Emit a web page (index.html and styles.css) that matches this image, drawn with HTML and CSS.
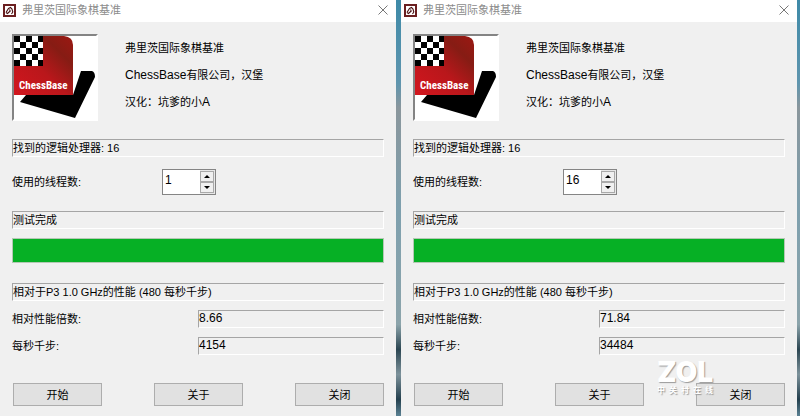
FILE: index.html
```html
<!DOCTYPE html>
<html lang="zh-CN">
<head>
    <meta charset="UTF-8">
    <meta name="viewport" content="width=device-width, initial-scale=1.0">
    <title>弗里茨国际象棋基准</title>
    <link rel="stylesheet" href="styles.css">
</head>
<body>
    <!-- Shared drawings -->
    <svg class="defs" width="0" height="0" aria-hidden="true">
        <defs>
            <linearGradient id="redFade" x1="0" y1="1" x2="1" y2="0">
                <stop offset="0" stop-color="#d3161e"/>
                <stop offset="0.45" stop-color="#b9171b"/>
                <stop offset="0.75" stop-color="#861c14"/>
                <stop offset="1" stop-color="#9c1812"/>
            </linearGradient>
            <pattern id="checks" width="12" height="12" patternUnits="userSpaceOnUse">
                <rect width="12" height="12" fill="#fff"/>
                <path d="M0 0h6v6h6v6H6V6H0z" fill="#000"/>
            </pattern>
            <symbol id="horse" viewBox="0 0 13 13">
                <rect x="1" y="1" width="11" height="11" fill="#fff" stroke="#6b1f20" stroke-width="2"/>
                <path d="M3 8.5 5.5 4.5 7.5 3.5 9 5l.8 3-1.3 2M6.5 5.5 7.2 7 4.5 9.5 3 8.5" fill="none" stroke="#4b1113" stroke-width="1.1"/>
            </symbol>
            <symbol id="logo" viewBox="0 0 82 83">
                <path d="M67 35h11q3 1 3 6L61 82 6 66l6-7h47z" fill="#000"/>
                <path d="M0 0h50q9 1 9 9v50H0z" fill="url(#redFade)"/>
                <rect width="29" height="30" fill="url(#checks)"/>
            </symbol>
        </defs>
    </svg>

    <main class="desktop">
        <section class="window">
            <header class="titlebar">
                <svg class="app-icon"><use href="#horse"/></svg>
                <h1>弗里茨国际象棋基准</h1>
                <button class="close" type="button" aria-label="关闭窗口">
                    <svg viewBox="0 0 10 10"><path d="M0.5 0.5 9.5 9.5M9.5 0.5 0.5 9.5"/></svg>
                </button>
            </header>
            <form class="content">
                <div class="about">
                    <div class="logo">
                        <svg viewBox="0 0 82 83"><use href="#logo"/><text x="5" y="53">ChessBase</text></svg>
                    </div>
                    <div class="about-text">
                        <p>弗里茨国际象棋基准</p>
                        <p><span class="latin">ChessBase</span>有限公司，汉堡</p>
                        <p>汉化：坑爹的小<span class="latin">A</span></p>
                    </div>
                </div>
                <div class="field">找到的逻辑处理器: 16</div>
                <div class="threads">
                    <label for="threads1">使用的线程数:</label>
                    <div class="spinner">
                        <input id="threads1" type="text" value="1">
                        <div class="arrows">
                            <button type="button" class="up" aria-label="增加"></button>
                            <button type="button" class="down" aria-label="减少"></button>
                        </div>
                    </div>
                </div>
                <div class="field">测试完成</div>
                <div class="progress" role="progressbar" aria-label="进度" aria-valuenow="100"></div>
                <div class="field">相对于P3 1.0 GHz的性能 (480 每秒千步)</div>
                <div class="result">
                    <label for="ratio1">相对性能倍数:</label>
                    <output class="field" id="ratio1">8.66</output>
                </div>
                <div class="result">
                    <label for="knps1">每秒千步:</label>
                    <output class="field" id="knps1">4154</output>
                </div>
                <div class="actions">
                    <button type="button">开始</button>
                    <button type="button">关于</button>
                    <button type="button">关闭</button>
                </div>
            </form>
        </section>

        <section class="window">
            <header class="titlebar">
                <svg class="app-icon"><use href="#horse"/></svg>
                <h1>弗里茨国际象棋基准</h1>
                <button class="close" type="button" aria-label="关闭窗口">
                    <svg viewBox="0 0 10 10"><path d="M0.5 0.5 9.5 9.5M9.5 0.5 0.5 9.5"/></svg>
                </button>
            </header>
            <form class="content">
                <div class="about">
                    <div class="logo">
                        <svg viewBox="0 0 82 83"><use href="#logo"/><text x="5" y="53">ChessBase</text></svg>
                    </div>
                    <div class="about-text">
                        <p>弗里茨国际象棋基准</p>
                        <p><span class="latin">ChessBase</span>有限公司，汉堡</p>
                        <p>汉化：坑爹的小<span class="latin">A</span></p>
                    </div>
                </div>
                <div class="field">找到的逻辑处理器: 16</div>
                <div class="threads">
                    <label for="threads2">使用的线程数:</label>
                    <div class="spinner">
                        <input id="threads2" type="text" value="16">
                        <div class="arrows">
                            <button type="button" class="up" aria-label="增加"></button>
                            <button type="button" class="down" aria-label="减少"></button>
                        </div>
                    </div>
                </div>
                <div class="field">测试完成</div>
                <div class="progress" role="progressbar" aria-label="进度" aria-valuenow="100"></div>
                <div class="field">相对于P3 1.0 GHz的性能 (480 每秒千步)</div>
                <div class="result">
                    <label for="ratio2">相对性能倍数:</label>
                    <output class="field" id="ratio2">71.84</output>
                </div>
                <div class="result">
                    <label for="knps2">每秒千步:</label>
                    <output class="field" id="knps2">34484</output>
                </div>
                <div class="actions">
                    <button type="button">开始</button>
                    <button type="button">关于</button>
                    <button type="button">关闭</button>
                </div>
            </form>
            <div class="watermark">
                <strong>ZOL</strong>
                <div class="watermark-sub">
                    <span>中</span><span>关</span><span>村</span><span>在</span><span>线</span>
                </div>
            </div>
        </section>
    </main>
</body>
</html>
```
FILE: styles.css
```css
* {
    box-sizing: border-box;
}
body {
    margin: 0;
    font-family: "Liberation Sans", "Noto Sans CJK SC", sans-serif;
    font-size: 11px;
    line-height: 16px;
    color: #000;
}
h1, p {
    margin: 0;
    font-size: 11px;
    font-weight: normal;
}
button, input {
    font: inherit;
    color: inherit;
    padding: 0;
    margin: 0;
}
.defs {
    position: absolute;
}
.desktop {
    display: grid;
    grid-template-columns: 1fr 1fr;
    gap: 5px;
    min-height: 100vh;
    padding-right: 3px;
    background: linear-gradient(#3e8aa8, #5f95ae 20%, #8a969c 26%, #7ea0ae 50%, #8ca4ab 78%, #2c4652 84%, #7d929b 90%, #24404e 96%, #5c8294);
}
.window {
    position: relative;
    background: #f0f0f0;
}

/* Title bar */
.titlebar {
    display: flex;
    align-items: center;
    height: 22px;
    padding: 0 8px 2px 3px;
    background: #fff;
}
.titlebar h1 {
    flex: 1;
    color: #8c8c8c;
}
.app-icon {
    width: 13px;
    height: 13px;
    margin-right: 6px;
}
.close {
    display: flex;
    border: none;
    background: none;
}
.close svg {
    width: 10px;
    height: 10px;
    fill: none;
    stroke: #777;
}

/* Dialog content */
.content {
    padding: 12px 12px 0;
}
.about {
    display: flex;
    gap: 27px;
}
.logo {
    width: 86px;
    height: 87px;
    border: 2px solid #fff;
    border-top-color: #848484;
    border-left-color: #848484;
    background: #fff;
}
.logo svg {
    display: block;
    width: 82px;
    height: 83px;
}
.logo text {
    fill: #fff;
    font-family: "Roboto Condensed", Roboto, sans-serif;
    font-size: 11px;
    font-weight: bold;
}
.about-text {
    display: flex;
    flex-direction: column;
    gap: 11px;
    padding-top: 6px;
}
.latin {
    font-size: 12px;
}
.field {
    display: block;
    height: 18px;
    border: 1px solid #fff;
    border-top-color: #a5a5a5;
    border-left-color: #a5a5a5;
}
.about + .field {
    margin-top: 18px;
}
.threads {
    display: flex;
    align-items: center;
    height: 26px;
    margin: 12px 0 16px;
}
.threads label {
    width: 150px;
}
.spinner {
    display: flex;
    width: 54px;
    height: 26px;
    border: 1px solid #858585;
    background: #fff;
}
.spinner input {
    flex: 1;
    min-width: 0;
    height: 20px;
    padding-left: 2px;
    border: none;
    background: none;
    font-size: 12px;
}
.arrows {
    display: grid;
    grid-template-rows: 1fr 1fr;
    width: 15px;
    padding: 1px 1px 1px 0;
    background: #e8e8e8;
}
.arrows button {
    display: flex;
    align-items: center;
    justify-content: center;
    border: 1px solid #a9a9a9;
    background: #f0f0f0;
}
.arrows button::before {
    content: "";
    border: 3px solid transparent;
}
.arrows .up::before {
    border-top-width: 0;
    border-bottom-color: #000;
}
.arrows .down::before {
    border-bottom-width: 0;
    border-top-color: #000;
}
.progress {
    height: 25px;
    margin: 9px 0 20px;
    border: 1px solid #b4c8b4;
    background: #06b025;
}
.result {
    display: grid;
    grid-template-columns: 1fr 1fr;
    align-items: center;
    margin-top: 9px;
}
.result .field {
    font-size: 12px;
    line-height: 15px;
}
.actions {
    display: flex;
    justify-content: space-between;
    margin-top: 28px;
    padding-left: 1px;
}
.actions button {
    width: 89px;
    height: 23px;
    border: 1px solid #adadad;
    background: #e1e1e1;
}

/* Site mark over the lower right corner */
.watermark {
    position: absolute;
    right: 84px;
    bottom: 20px;
    display: flex;
    flex-direction: column;
    gap: 2px;
    color: #fff;
    text-shadow: 1px 1px 1px #999;
    pointer-events: none;
}
.watermark strong {
    font-family: Inter, "Liberation Sans", sans-serif;
    font-size: 28px;
    font-weight: 900;
    line-height: 24px;
}
.watermark-sub {
    display: flex;
    justify-content: space-between;
    font-size: 8px;
    font-weight: bold;
    line-height: 10px;
}
```
